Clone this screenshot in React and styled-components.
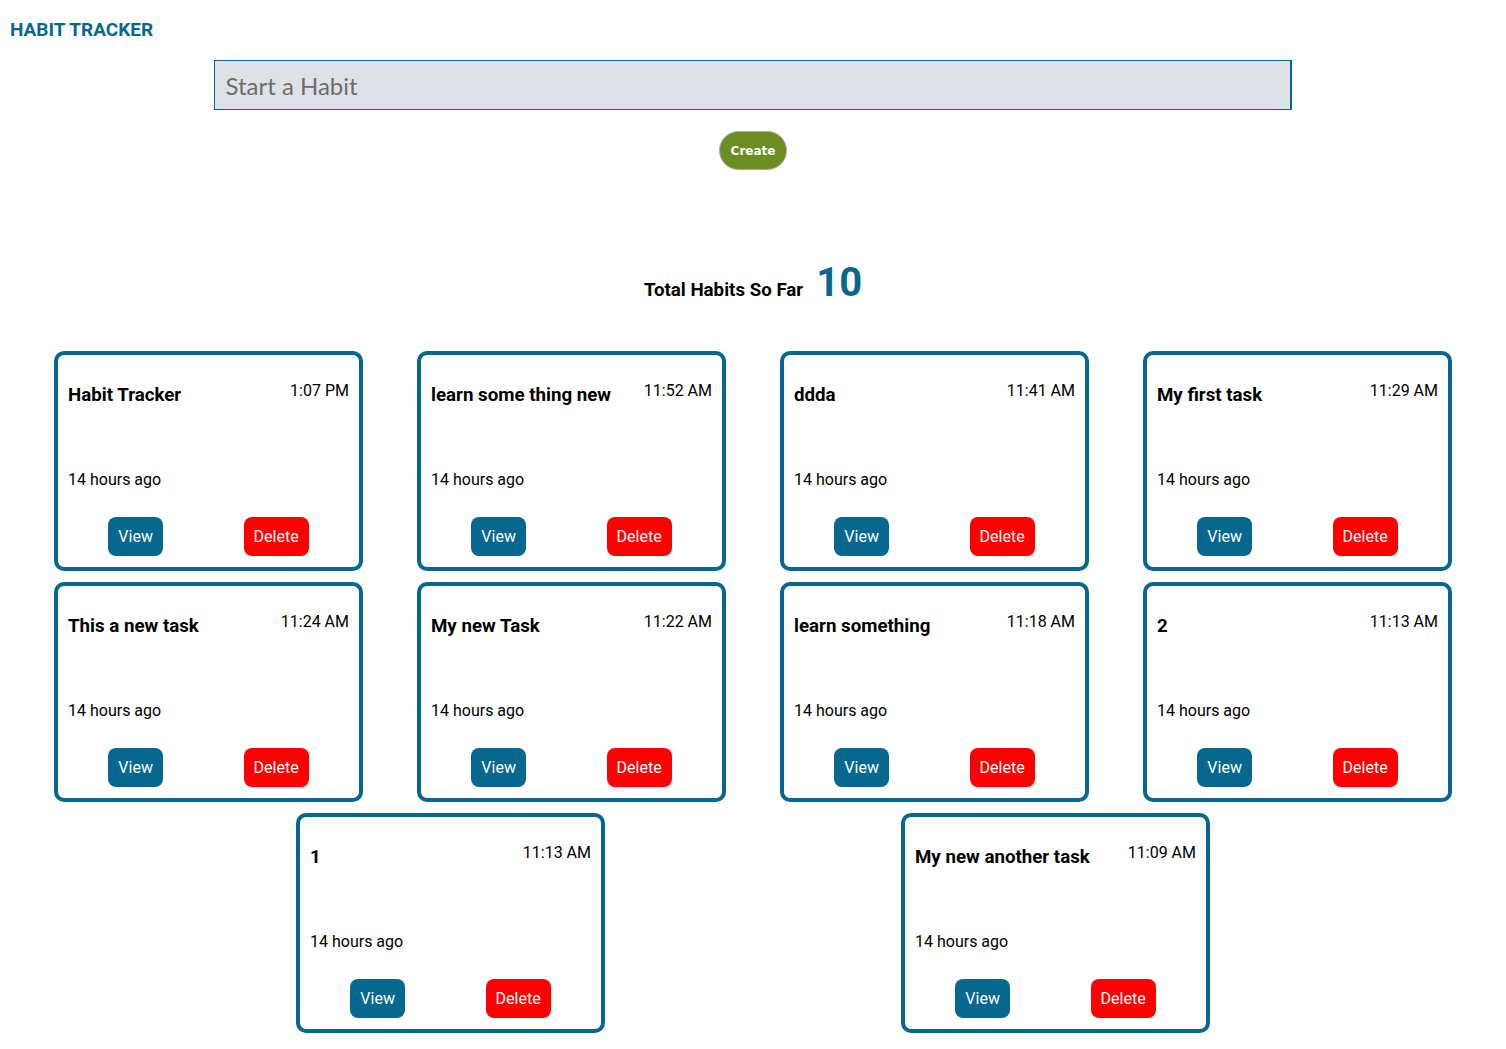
import React from "react";
import styled, { createGlobalStyle } from "styled-components";

const BLUE = "#07688f";

const Global = createGlobalStyle`
  html, body { margin: 0; padding: 0; background: #fff; }
  body { font-family: Roboto, "Liberation Sans", Arial, sans-serif; color: #000; }
  * { box-sizing: content-box; }
`;

const Page = styled.div`
  width: 1506px;
  padding-bottom: 16px;
`;

const Heading = styled.h1`
  margin: 0;
  padding: 18px 0 0 10px;
  font-size: 19px;
  line-height: 24px;
  font-weight: 700;
  color: ${BLUE};
`;

const Form = styled.div`
  display: flex;
  flex-direction: column;
  align-items: center;
  margin-top: 18px;
`;

const Input = styled.input`
  width: 70%;
  height: 48px;
  padding: 0 10px;
  border: 1px solid ${BLUE};
  border-right-width: 2px;
  background: #dee2e6;
  font-family: Lato, "Open Sans", sans-serif;
  font-size: 24px;
  color: #333;
  outline: none;
  &::placeholder { color: #6c6c6c; }
`;

const CreateButton = styled.button`
  margin-top: 21px;
  height: 37px;
  padding: 0 11px;
  border: 1px solid #a9a9a9;
  border-radius: 20px;
  background: #6b8e23;
  color: #fff;
  font-family: "DejaVu Sans", Verdana, sans-serif;
  font-weight: 700;
  font-size: 12px;
`;

const TotalRow = styled.div`
  display: flex;
  justify-content: center;
  align-items: baseline;
  gap: 13px;
  margin-top: 89px;
`;

const TotalLabel = styled.span`
  font-size: 18.72px;
  font-weight: 700;
`;

const TotalCount = styled.span`
  font-size: 40px;
  font-weight: 700;
  color: ${BLUE};
`;

const Grid = styled.div`
  display: flex;
  flex-wrap: wrap;
  justify-content: space-evenly;
  row-gap: 11px;
  margin-top: 45px;
`;

const Card = styled.div`
  width: 281px;
  padding: 10px 10px 11px;
  border: 4px solid ${BLUE};
  border-radius: 10px;
  display: flex;
  flex-direction: column;
`;

const TopRow = styled.div`
  display: flex;
  justify-content: space-between;
  align-items: flex-start;
  height: 57px;
`;

const Title = styled.h3`
  margin: 19px 0 0;
  font-size: 18.72px;
  line-height: 22px;
  font-weight: 700;
`;

const Time = styled.p`
  margin: 16px 0 0;
  font-size: 16px;
  line-height: 19px;
`;

const Ago = styled.p`
  margin: 48px 0 28px;
  font-size: 16px;
  line-height: 19px;
`;

const Actions = styled.div`
  display: flex;
  justify-content: space-around;
`;

const ActionButton = styled.button`
  height: 39px;
  padding: 0 10px;
  border: none;
  border-radius: 8px;
  background: ${(p) => (p.$danger ? "#ff0000" : BLUE)};
  color: #fff;
  font-family: Roboto, "Liberation Sans", sans-serif;
  font-size: 16px;
`;

const habits = [
  ["Habit Tracker", "1:07 PM"],
  ["learn some thing new", "11:52 AM"],
  ["ddda", "11:41 AM"],
  ["My first task", "11:29 AM"],
  ["This a new task", "11:24 AM"],
  ["My new Task", "11:22 AM"],
  ["learn something", "11:18 AM"],
  ["2", "11:13 AM"],
  ["1", "11:13 AM"],
  ["My new another task", "11:09 AM"],
];

export default function App() {
  return (
    <Page>
      <Global />
      <Heading>HABIT TRACKER</Heading>
      <Form>
        <Input placeholder="Start a Habit" />
        <CreateButton>Create</CreateButton>
      </Form>
      <TotalRow>
        <TotalLabel>Total Habits So Far</TotalLabel>
        <TotalCount>{habits.length}</TotalCount>
      </TotalRow>
      <Grid>
        {habits.map(([title, time], i) => (
          <Card key={i}>
            <TopRow>
              <Title>{title}</Title>
              <Time>{time}</Time>
            </TopRow>
            <Ago>14 hours ago</Ago>
            <Actions>
              <ActionButton>View</ActionButton>
              <ActionButton $danger>Delete</ActionButton>
            </Actions>
          </Card>
        ))}
      </Grid>
    </Page>
  );
}
